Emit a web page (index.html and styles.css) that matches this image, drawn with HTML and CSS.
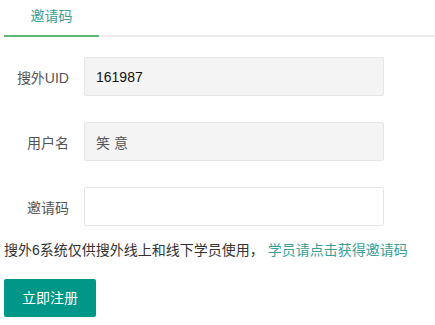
FILE: index.html
```html
<!DOCTYPE html>
<html lang="zh">
<head>
<meta charset="utf-8">
<link rel="stylesheet" href="styles.css">
</head>
<body>
<div class="page">
  <div class="tabs">
    <div class="tab active">邀请码</div>
  </div>
  <form class="form">
    <div class="row">
      <label class="label">搜外UID</label>
      <input class="input readonly value-dark" type="text" value="161987" readonly>
    </div>
    <div class="row">
      <label class="label">用户名</label>
      <input class="input readonly" type="text" value="笑 意" readonly>
    </div>
    <div class="row">
      <label class="label">邀请码</label>
      <input class="input" type="text">
    </div>
    <p class="note">搜外6系统仅供搜外线上和线下学员使用， <a class="link" href="#">学员请点击获得邀请码</a></p>
    <button class="btn" type="button">立即注册</button>
  </form>
</div>
</body>
</html>
```

FILE: styles.css
```css
html, body {
  margin: 0;
  padding: 0;
  background: #fff;
}
body {
  font-family: "Liberation Sans", "Noto Sans CJK SC", sans-serif;
  font-size: 14px;
  color: #333;
}
.page {
  padding-left: 4px;
}
.tabs {
  display: flex;
  height: 35px;
  border-bottom: 2px solid #ececec;
}
.tab {
  width: 95px;
  height: 35px;
  line-height: 32px;
  text-align: center;
  color: #3a9e96;
  font-size: 14px;
}
.tab.active {
  border-bottom: 2px solid #5fb878;
}
.form {
  margin: 20px 0 0 0;
}
.row {
  display: flex;
  align-items: center;
  height: 39px;
  margin-bottom: 26px;
}
.label {
  width: 80px;
  box-sizing: border-box;
  padding-right: 15px;
  text-align: right;
  color: #555;
  font-size: 14px;
}
.input {
  width: 300px;
  height: 39px;
  box-sizing: border-box;
  border: 1px solid #e6e6e6;
  border-radius: 2px;
  padding: 0 0 0 11px;
  margin: 0;
  font-family: "Liberation Sans", "Noto Sans CJK SC", sans-serif;
  font-size: 14px;
  color: #555;
  background: #fff;
  outline: none;
}
.input.readonly {
  background: #f4f4f4;
}
.input.value-dark {
  color: #111;
}
.note {
  margin: -12px 0 0 0;
  line-height: 20px;
  color: #333;
}
.link {
  color: #3a9e96;
  text-decoration: none;
}
.btn {
  display: block;
  margin-top: 19px;
  height: 38px;
  padding: 0 18px;
  border: none;
  border-radius: 2px;
  background: #009688;
  color: #fff;
  font-family: "Liberation Sans", "Noto Sans CJK SC", sans-serif;
  font-size: 14px;
  line-height: 38px;
}
```
